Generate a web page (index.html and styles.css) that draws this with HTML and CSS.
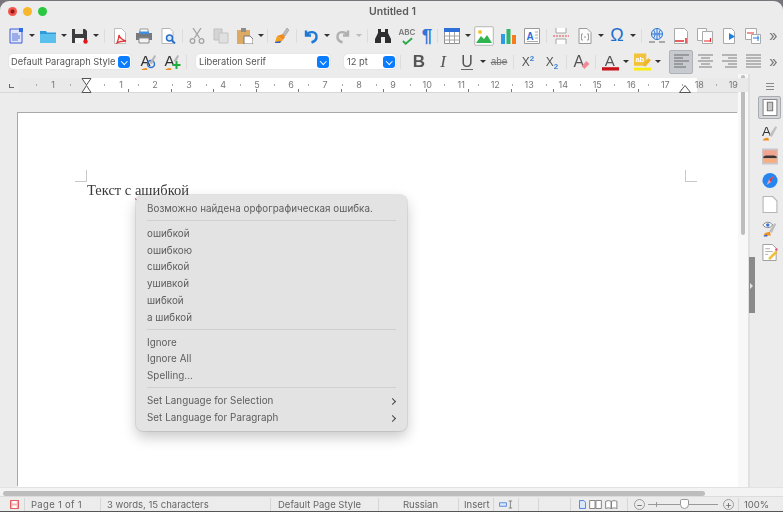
FILE: index.html
```html
<!DOCTYPE html>
<html>
<head>
  <title>Untitled 1</title>
  <link rel="stylesheet" href="styles.css">
</head>
<body>
<div class="window">
  <div class="titlebar">
    <span class="light light-red"></span>
    <span class="light light-yellow"></span>
    <span class="light light-green"></span>
    <span class="title">Untitled 1</span>
  </div>

  <div class="toolbar toolbar-main">
    <span class="tb"><svg viewBox="0 0 16 16"><path d="M2 1h9l3 3v11H2z" fill="#dfe5fb" stroke="#3f5fd6"/><path d="M4 6h6M4 8h8M4 10h8M4 12h6" stroke="#5a74d8"/><path d="M11 0h4v4h-4z" fill="#2d6be0"/></svg></span><span class="dd"></span>
    <span class="tb"><svg viewBox="0 0 16 16"><path d="M0 3h6l1 1.500h9V15H0z" fill="#2f9bd8"/><path d="M0 6h16v9H0z" fill="#5cc0ee"/></svg></span><span class="dd"></span>
    <span class="tb"><svg viewBox="0 0 16 16"><path d="M0 1h13l2 2v12H0z" fill="#3c3c3e"/><path d="M3 1h8v5H3z" fill="#e6e6e6"/><path d="M3 10h9v5H3z" fill="#f4f4f4"/><circle cx="13.500" cy="13.500" r="2.200" fill="#e8141c"/></svg></span><span class="dd"></span>
    <span class="sep"></span>
    <span class="tb"><svg viewBox="0 0 16 16"><path d="M2.500 .5h7l4 4v11h-11z" fill="#fff" stroke="#bdbdbd"/><path d="M7 7c1 3 3 5 7 6-3 0-6 0-9 2 1-3 2-5 2-8z" fill="none" stroke="#e2383a" stroke-width="1.300"/></svg></span>
    <span class="tb"><svg viewBox="0 0 16 16"><path d="M4 1h8v4H4z" fill="#fff" stroke="#9a9a9a"/><path d="M0 5h16v7H0z" fill="#77797d"/><path d="M3 3.500h10V6H3z" fill="#3f8fe0"/><path d="M3 10h10v5H3z" fill="#f2f2f2" stroke="#8a8a8a"/></svg></span>
    <span class="tb"><svg viewBox="0 0 16 16"><path d="M2 .5h8l3 3v12H2z" fill="#fff" stroke="#b5b5b5"/><circle cx="9.500" cy="10" r="3" fill="#d6e8fa" stroke="#2a6fc9" stroke-width="1.500"/><path d="M12 12.500l3 3" stroke="#2a6fc9" stroke-width="2"/></svg></span>
    <span class="sep sep-small"></span>
    <span class="tb"><svg viewBox="0 0 16 16" fill="none" stroke="#a3a3a3" stroke-width="1.300"><path d="M4 0l6.500 10M12 0L5.500 10"/><circle cx="3.500" cy="13" r="2.300"/><circle cx="12.500" cy="13" r="2.300"/></svg></span>
    <span class="tb"><svg viewBox="0 0 16 16"><path d="M1 1h8v11H1z" fill="#d4d4d4" stroke="#c0c0c0"/><path d="M6 5h9v10H6z" fill="#e0e0e0" stroke="#c4c4c4"/></svg></span>
    <span class="tb"><svg viewBox="0 0 16 16"><path d="M0 2h13v14H0z" fill="#dcaa62"/><path d="M4 0h5v4H4z" fill="#8d8d8d"/><path d="M7 8h6l3 3v5H7z" fill="#fff" stroke="#777"/></svg></span><span class="dd"></span>
    <span class="sep sep-small"></span>
    <span class="tb"><svg viewBox="0 0 16 16"><path d="M9 6l4-6 2 2-4 6z" fill="#bdbdbd" stroke="#8a8a8a" stroke-width=".5"/><path d="M3 8l6-2 2 3-2 3z" fill="#f08a1d"/><path d="M1 14l2-6 6 4-3 3z" fill="#f3a21f"/><path d="M1 14l6-1-1 2H1z" fill="#2d5fd0"/></svg></span>
    <span class="sep sep-small"></span>
    <span class="tb"><svg viewBox="0 0 16 16" fill="none" stroke="#1d78d6" stroke-width="2.400"><path d="M3 2.500v5h5M3.500 7C6 3 13 3 13.500 8c.3 3-2 5.500-5 6.500"/></svg></span><span class="dd"></span>
    <span class="tb"><svg viewBox="0 0 16 16" fill="none" stroke="#b0b0b0" stroke-width="2.400"><path d="M13 2.500v5H8M12.500 7C10 3 3 3 2.500 8c-.3 3 2 5.500 5 6.500"/></svg></span><span class="dd dd-off"></span>
    <span class="sep"></span>
    <span class="tb"><svg viewBox="0 0 16 16" fill="#2e2e30"><path d="M3 1h3v3h4V1h3v4l3 6v4H10V9H6v6H0v-4l3-6z"/></svg></span>
    <span class="tb tb-abc"><span class="abc">ABC</span><svg class="check" viewBox="0 0 12 8"><path d="M1 4l3 3 7-6" fill="none" stroke="#2aa84a" stroke-width="2"/></svg></span>
    <span class="tb tb-narrow"><span class="pilcrow">¶</span></span>
    <span class="sep sep-small"></span>
    <span class="tb"><svg viewBox="0 0 16 16"><path d="M.5 .5h15v15H.5z" fill="#fff" stroke="#8f8f8f"/><path d="M0 0h16v4H0z" fill="#2f6fd8"/><path d="M0 8h16M0 12h16M5.500 4v12M10.500 4v12" stroke="#a0a0a0"/></svg></span><span class="dd"></span>
    <span class="tb tb-hover"><svg viewBox="0 0 16 16"><path d="M0 0h16v16H0z" fill="#fff"/><circle cx="4" cy="4" r="2" fill="#f7c52c"/><path d="M0 15l5-7 3 3 3-4 5 8z" fill="#2fb550"/></svg></span>
    <span class="tb"><svg viewBox="0 0 16 16"><path d="M1 6h4v10H1z" fill="#2e9be6"/><path d="M6.500 1h4v15h-4z" fill="#34b567"/><path d="M12 7h4v9h-4z" fill="#f57d20"/></svg></span>
    <span class="tb"><svg viewBox="0 0 16 16"><path d="M.5 .5h15v15H.5z" fill="#fff" stroke="#9a9a9a"/><text x="2.500" y="12" class="svg-a">A</text><path d="M11 4h3M11 7h3M11 10h3M3 13.500h11" stroke="#aaa"/></svg></span>
    <span class="sep sep-small"></span>
    <span class="tb"><svg viewBox="0 0 16 16"><path d="M3 0v5h10V0M3 16v-5h10v5" fill="#fff" stroke="#a5a5a5"/><path d="M0 8h16" stroke="#e04a4a" stroke-dasharray="2 1"/></svg></span>
    <span class="tb"><svg viewBox="0 0 16 16" fill="none" stroke="#9a9a9a"><path d="M2 .5h8l4 4v11H2z" fill="#fbfbfb"/><path d="M6 6H4.500v6H6M10 6h1.500v6H10M7 9h2"/></svg></span><span class="dd"></span>
    <span class="tb"><span class="omega">Ω</span></span><span class="dd"></span>
    <span class="sep"></span>
    <span class="tb"><svg viewBox="0 0 16 16" fill="none" stroke="#2f74d0"><circle cx="8" cy="6" r="5.500" fill="#dcebfb"/><path d="M2.500 6h11M8 .5v11M4.500 2c2 2.500 2 5.500 0 8M11.500 2c-2 2.500-2 5.500 0 8"/><path d="M0 14h6M10 14h6" stroke="#666"/></svg></span>
    <span class="tb"><svg viewBox="0 0 16 16"><path d="M1.500 .5h10l3 3v12h-13z" fill="#fff" stroke="#aaa"/><path d="M2 13h9" stroke="#e0282c" stroke-width="1.500"/><path d="M13 10v5" stroke="#e0282c" stroke-width="1.500"/></svg></span>
    <span class="tb"><svg viewBox="0 0 16 16"><path d="M.5 .5h9v12h-9z" fill="#fff" stroke="#aaa"/><path d="M5.500 3.500h10v12h-10z" fill="#fff" stroke="#aaa"/><path d="M7 13h6M13.500 10v4" stroke="#e0282c" stroke-width="1.200"/></svg></span>
    <span class="tb"><svg viewBox="0 0 16 16"><path d="M2.500 .5h8l3 3v12h-11z" fill="#fff" stroke="#aaa"/><path d="M8 5v7l6-3.500z" fill="#1f7fe0"/></svg></span>
    <span class="tb"><svg viewBox="0 0 16 16"><path d="M.5 .5h11v11H.5z" fill="#fff" stroke="#aaa"/><path d="M2 5h7" stroke="#e0282c"/><path d="M6.500 6.500h9v9h-9z" fill="#fff" stroke="#aaa"/><path d="M8 10h6M13 7.500V13" stroke="#1f7fe0"/></svg></span>
    <span class="more">»</span>
  </div>

  <div class="toolbar toolbar-format">
    <div class="combo combo-style"><span class="combo-text">Default Paragraph Style</span><span class="combo-btn"></span></div>
    <span class="tb tb-first"><svg viewBox="0 0 16 18"><text x="0" y="13" class="svg-style">A</text><path d="M6 15c-3 0-5 1-5 2h6z" fill="#f09020"/><circle cx="10.500" cy="11" r="3.500" fill="none" stroke="#2f74d0" stroke-width="1.500"/><path d="M9 10l5-8 1.500 1-4 8z" fill="#b5b5b5"/></svg></span>
    <span class="tb"><svg viewBox="0 0 16 18"><text x="0" y="13" class="svg-style">A</text><path d="M6 15c-3 0-5 1-5 2h6z" fill="#f09020"/><path d="M12 8v8M8 12h8" stroke="#1fae3c" stroke-width="2"/><path d="M9 8l4-6 1.500 1-3 6z" fill="#b5b5b5"/></svg></span>
    <span class="sep sep-fmt"></span>
    <div class="combo combo-font"><span class="combo-text">Liberation Serif</span><span class="combo-btn"></span></div>
    <div class="combo combo-size"><span class="combo-text">12 pt</span><span class="combo-btn"></span></div>
    <span class="sep sep-fmt2"></span>
    <span class="tb tb-text"><b class="fmt-b">B</b></span>
    <span class="tb tb-text"><i class="fmt-i">I</i></span>
    <span class="tb tb-text tb-u"><span class="fmt-u">U</span></span><span class="dd"></span>
    <span class="tb tb-text"><span class="fmt-abe">abe</span></span>
    <span class="sep sep-small"></span>
    <span class="tb tb-text"><span class="fmt-x">X<sup>2</sup></span></span>
    <span class="tb tb-text"><span class="fmt-x">X<sub>2</sub></span></span>
    <span class="sep sep-small"></span>
    <span class="tb"><svg viewBox="0 0 16 18"><text x="0" y="14" class="svg-clear">A</text><path d="M8 13l5-5 3 3-5 5z" fill="#ee8d9a"/></svg></span>
    <span class="sep sep-small"></span>
    <span class="tb"><svg viewBox="0 0 18 18"><text x="3" y="13" class="svg-clear">A</text><path d="M0 14.500h18V18H0z" fill="#c9141c"/></svg></span><span class="dd"></span>
    <span class="tb"><svg viewBox="0 0 18 18"><path d="M0 0h13v13H0z" fill="#f2c33a"/><text x="1.500" y="9" class="svg-ab">ab</text><path d="M9 12l6-7 3 2-6 7z" fill="#eeb52c"/><path d="M0 15h18v3H0z" fill="#f8ec10"/></svg></span><span class="dd"></span>
    <span class="align-group">
      <span class="tb tb-align tb-on"><svg viewBox="0 0 15 15"><path d="M0 1h15M0 4h9M0 7h15M0 10h9M0 13h12" stroke="#6a6a6a"/></svg></span>
      <span class="tb tb-align"><svg viewBox="0 0 15 15"><path d="M0 1h15M3 4h9M0 7h15M3 10h9M1 13h13" stroke="#7c7c7c"/></svg></span>
      <span class="tb tb-align"><svg viewBox="0 0 15 15"><path d="M0 1h15M6 4h9M0 7h15M6 10h9M3 13h12" stroke="#7c7c7c"/></svg></span>
      <span class="tb tb-align"><svg viewBox="0 0 15 15"><path d="M0 1h15M0 4h15M0 7h15M0 10h15M0 13h15" stroke="#7c7c7c"/></svg></span>
    </span>
    <span class="more">»</span>
  </div>

  <div class="workspace">
    <div class="editor">
      <div class="ruler-row">
        <span class="tab-corner"></span>
        <div class="ruler">
          <span class="rcell rcell-gray">1</span>
          <span class="rcell rcell-blank"></span>
          <span class="rcell">1</span><span class="rcell">2</span><span class="rcell">3</span><span class="rcell">4</span><span class="rcell">5</span><span class="rcell">6</span><span class="rcell">7</span><span class="rcell">8</span><span class="rcell">9</span><span class="rcell">10</span><span class="rcell">11</span><span class="rcell">12</span><span class="rcell">13</span><span class="rcell">14</span><span class="rcell">15</span><span class="rcell">16</span><span class="rcell">17</span><span class="rcell">18</span><span class="rcell">19</span>
          <svg class="indent" viewBox="0 0 11 15"><path d="M1 .5h9L5.500 7zM5.500 7.500L10 14.500H1z" fill="#fff" stroke="#555"/></svg>
          <svg class="margin-r" viewBox="0 0 12 8"><path d="M6 .5L11.500 7.500H.5z" fill="#fff" stroke="#555"/></svg>
        </div>
      </div>
      <div class="canvas">
        <div class="page">
          <div class="page-head">
            <span class="crop crop-l"></span>
            <span class="crop crop-r"></span>
          </div>
          <p class="doc-text">Текст с <span class="misspelt">ашибкой</span></p>
        </div>
      </div>
    </div>
    <div class="vscroll"><span class="vthumb"></span></div>
    <div class="deck-handle"><span class="deck-arrow"></span></div>
    <div class="sidebar">
      <span class="sb-menu"></span>
      <span class="sb sb-on"><svg viewBox="0 0 14 16"><path d="M.5 .5h13v15H.5z" fill="#fff" stroke="#8a8a8a"/><path d="M4.500 3h5v8h-5z" fill="#c8c8c8" stroke="#777"/></svg></span>
      <span class="sb"><svg viewBox="0 0 18 18"><text x="0" y="13" class="svg-style">A</text><path d="M7 15c-3 0-6 1-6 3h7z" fill="#f09020"/><path d="M8 12l7-10 2 1-6 11z" fill="#c0c0c0"/></svg></span>
      <span class="sb"><svg viewBox="0 0 18 18"><path d="M0 0h18v18H0z" fill="#c9c5cb"/><path d="M1.500 2h15v7h-15z" fill="#f2a58e"/><path d="M1.500 9l3-1h9l3 1v2h-15z" fill="#3a3438"/><path d="M1.500 11h15v5h-15z" fill="#f6ad7f"/></svg></span>
      <span class="sb"><svg viewBox="0 0 18 18"><circle cx="9" cy="9" r="8.500" fill="#2686f0"/><path d="M13 4L8 8l-3 6 5-3z" fill="#e9a2b8"/><path d="M13 4l-5 4 2 3z" fill="#e2333b"/></svg></span>
      <span class="sb"><svg viewBox="0 0 14 16"><path d="M.5 .5h9l4 4v11H.5z" fill="#fff" stroke="#b5b5b5"/></svg></span>
      <span class="sb"><svg viewBox="0 0 18 18"><path d="M1 5c3-4 8-4 11 0-3 4-8 4-11 0z" fill="#fff" stroke="#777"/><circle cx="6.500" cy="5" r="2" fill="#3b78d8"/><path d="M8 12l6-9 2 1-5 10z" fill="#bbb"/><path d="M9 13c-3 0-7 1-7 4h8z" fill="#f09020"/><path d="M2 17l4-1v2H2z" fill="#2d5fd0"/></svg></span>
      <span class="sb"><svg viewBox="0 0 16 18"><path d="M.5 .5h10l4 4v13H.5z" fill="#fff" stroke="#999"/><path d="M3 5h5M3 8h8M3 11h3" stroke="#aaa"/><path d="M6 15l8-8 2 2-8 8z" fill="#efbf3c"/><path d="M13 6l2-2 1.500 2-1.500 1.500z" fill="#e0607a"/></svg></span>
    </div>
  </div>

  <div class="hscroll"><span class="hthumb"></span></div>

  <div class="statusbar">
    <span class="st st-icon"><svg viewBox="0 0 10 10"><path d="M.5 .5h9v9h-9z" fill="#f3b6b6" stroke="#e0484c"/><path d="M2.500 1h5v3h-5zM2.500 6h5v3h-5z" fill="#fff"/></svg></span>
    <span class="st st-page">Page 1 of 1</span>
    <span class="st st-words">3 words, 15 characters</span>
    <span class="st st-style">Default Page Style</span>
    <span class="st st-lang">Russian</span>
    <span class="st st-mode">Insert</span>
    <span class="st st-sel"><svg viewBox="0 0 16 9"><path d="M.5 2.500h8v4h-8z" fill="#dbe8fb" stroke="#4a7fd8"/><path d="M11 .5h4M13 .5v8M11 8.500h4" stroke="#777" fill="none"/></svg></span>
    <span class="st st-empty"></span>
    <span class="st st-empty2"></span>
    <span class="st st-views">
      <svg viewBox="0 0 8 10"><path d="M.5 .5h5l2 2v7h-7z" fill="#dbe8fb" stroke="#3c78dc"/></svg>
      <svg class="view-wide" viewBox="0 0 14 10"><path d="M.5 .5h6v9h-6zM7.500 .5h6v9h-6z" fill="#fff" stroke="#777"/></svg>
      <svg class="view-wide" viewBox="0 0 14 10"><path d="M.5 1.500c2-1 4-1 6 0v8c-2-1-4-1-6 0zM7 1.500c2-1 4-1 6 0v8c-2-1-4-1-6 0z" fill="#fff" stroke="#777"/></svg>
    </span>
    <span class="st st-zoom">
      <span class="zoom-btn">−</span>
      <span class="zoom-track"><span class="zoom-knob"></span></span>
      <span class="zoom-btn">+</span>
    </span>
    <span class="st st-pct">100%</span>
  </div>

  <div class="menu">
    <div class="menu-item">Возможно найдена орфографическая ошибка.</div>
    <div class="menu-sep"></div>
    <div class="menu-item">ошибкой</div>
    <div class="menu-item">ошибкою</div>
    <div class="menu-item">сшибкой</div>
    <div class="menu-item">ушивкой</div>
    <div class="menu-item">шибкой</div>
    <div class="menu-item">а шибкой</div>
    <div class="menu-sep"></div>
    <div class="menu-item">Ignore</div>
    <div class="menu-item">Ignore All</div>
    <div class="menu-item">Spelling...</div>
    <div class="menu-sep"></div>
    <div class="menu-item menu-sub">Set Language for Selection</div>
    <div class="menu-item menu-sub">Set Language for Paragraph</div>
  </div>
</div>
</body>
</html>
```

FILE: styles.css
```css
html, body {
  margin: 0;
  padding: 0;
  height: 512px;
  overflow: hidden;
  background: #77757a;
}

.window {
  position: relative;
  display: flex;
  flex-direction: column;
  width: 783px;
  height: 511px;
  margin-top: 1px;
  border-radius: 9px 9px 0 0;
  overflow: hidden;
  background: #ececec;
  font-family: Inter, "Noto Sans", sans-serif;
  color: #555;
  filter: blur(0.55px);
}

/* title bar */
.titlebar {
  display: flex;
  align-items: center;
  flex: 0 0 21px;
  padding-left: 8px;
  gap: 6px;
  position: relative;
}
.light {
  width: 9px;
  height: 9px;
  border-radius: 50%;
}
.light-red { background: radial-gradient(circle, #8c1a14 0 1.500px, #f4564e 2.500px); }
.light-yellow { background: #f8b62d; }
.light-green { background: #2ac840; }
.title {
  flex: 1;
  text-align: center;
  font-size: 10.500px;
  font-weight: 600;
  color: #5c5c5c;
  margin-right: 51px;
}

/* toolbars */
.toolbar {
  display: flex;
  align-items: center;
  padding-left: 4px;
}
.toolbar-main {
  flex: 0 0 27px;
}
.toolbar-format {
  flex: 0 0 25px;
  padding-left: 9px;
}
.tb {
  display: flex;
  align-items: center;
  justify-content: center;
  flex: 0 0 24px;
  height: 22px;
}
.tb svg {
  width: 16px;
  height: 16px;
  display: block;
}
.tb-narrow { flex-basis: 16px; }
.tb-hover {
  flex-basis: 20px;
  margin: 0 2px;
  height: 20px;
  box-sizing: border-box;
  border: 1px solid #c4c4c4;
  border-radius: 2px;
}
.dd {
  flex: 0 0 8px;
  height: 10px;
  position: relative;
}
.dd::after {
  content: "";
  position: absolute;
  left: 1px;
  top: 3px;
  border: 3px solid transparent;
  border-top: 3px solid #333;
}
.dd-off::after { border-top-color: #bbb; }
.sep {
  flex: 0 0 8px;
  height: 18px;
  position: relative;
}
.sep::after {
  content: "";
  position: absolute;
  left: 4px;
  top: 2px;
  bottom: 2px;
  width: 1px;
  background: #dcdcdc;
}
.sep-small { flex-basis: 5px; }
.sep-small::after { left: 2px; }
.more {
  margin-left: auto;
  width: 14px;
  font-size: 15px;
  line-height: 15px;
  color: #777;
}

.abc {
  position: absolute;
  font-size: 8px;
  font-weight: 600;
  color: #777;
  transform: translateY(-4px);
}
.tb-abc { position: relative; }
.tb-abc .check {
  width: 11px;
  height: 8px;
  margin-top: 10px;
}
.pilcrow {
  font-size: 19px;
  font-weight: 700;
  color: #2f74d8;
  font-family: "Liberation Sans", sans-serif;
}
.omega {
  font-size: 18px;
  color: #1f6fd0;
  font-family: "Liberation Sans", sans-serif;
}
.svg-a {
  font: 700 10px "Liberation Sans", sans-serif;
  fill: #2f6fd8;
}
.svg-style {
  font: 400 15px "Liberation Sans", sans-serif;
  fill: #333;
}
.svg-clear {
  font: 400 16px "Liberation Sans", sans-serif;
  fill: #555;
}
.svg-ab {
  font: 700 8px "Liberation Sans", sans-serif;
  fill: #fff;
}

/* combo boxes */
.combo {
  display: flex;
  align-items: center;
  height: 15px;
  background: #fff;
  border-radius: 4px;
  box-shadow: 0 0 1px #bbb;
  box-sizing: border-box;
}
.combo-text {
  flex: 1;
  font-size: 9.300px;
  white-space: nowrap;
  overflow: hidden;
  padding-left: 2px;
  color: #555;
}
.combo-btn {
  flex: 0 0 12px;
  height: 12px;
  margin-right: 1px;
  border-radius: 3px;
  background: #0a7cff;
  position: relative;
}
.combo-btn::after {
  content: "";
  position: absolute;
  left: 3.500px;
  top: 3px;
  width: 3.500px;
  height: 3.500px;
  border: solid #fff;
  border-width: 0 1.300px 1.300px 0;
  transform: rotate(45deg);
}
.combo-style { flex: 0 0 122px; }
.combo-font { flex: 0 0 134px; margin-left: 6px; }
.combo-font .combo-text { padding-left: 3px; }
.combo-size { flex: 0 0 52px; margin-left: 14px; }
.combo-size .combo-text { padding-left: 3px; }
.tb-first { margin-left: 5px; }
.toolbar-format .tb svg { width: 17px; height: 18px; }
.sep-fmt { flex-basis: 6px; }
.sep-fmt::after { left: 2px; }
.sep-fmt2 { flex-basis: 11px; }

.tb-text { color: #555; }
.fmt-b { font: 700 17px "Liberation Sans", sans-serif; }
.fmt-i { font: italic 400 17px "Liberation Serif", serif; }
.fmt-u {
  font: 400 16px "Liberation Sans", sans-serif;
  border-bottom: 1.500px solid #666;
  line-height: 15px;
  height: 15px;
  display: block;
}
.fmt-abe {
  font: 400 10px "Liberation Sans", sans-serif;
  text-decoration: line-through;
  color: #777;
}
.fmt-x { font: 400 12px "Liberation Sans", sans-serif; }
.fmt-x sup, .fmt-x sub {
  font-size: 8px;
  font-weight: 700;
  color: #3a82e0;
  line-height: 0;
}

.align-group {
  display: flex;
  align-items: center;
  margin-left: 7px;
}
.tb-align {
  flex-basis: 24px;
  height: 24px;
  box-sizing: border-box;
}
.tb-align svg, .toolbar-format .tb-align svg { width: 15px; height: 15px; }
.tb-on {
  background: #c7cacf;
  border: 1px solid #aeb1b6;
  border-radius: 2px;
}

/* main area */
.workspace {
  flex: 1;
  display: flex;
  min-height: 0;
}
.editor {
  flex: 0 0 738px;
  display: flex;
  flex-direction: column;
  min-width: 0;
}
.ruler-row {
  display: flex;
  align-items: center;
  flex: 0 0 19px;
  padding-top: 3px;
  box-sizing: border-box;
  border-bottom: 1px solid #d8d8d8;
}
.tab-corner {
  flex: 0 0 19px;
  height: 14px;
  position: relative;
}
.tab-corner::after {
  content: "";
  position: absolute;
  left: 9px;
  top: 6px;
  width: 4px;
  height: 3px;
  border: solid #666;
  border-width: 0 0 1.500px 1.500px;
}
.ruler {
  position: relative;
  display: flex;
  flex: 1;
  height: 14px;
  background:
    linear-gradient(#e9e9e9, #e9e9e9) 0 0 / 68px 100% no-repeat,
    linear-gradient(#e9e9e9, #e9e9e9) 100% 0 / 53px 100% no-repeat,
    #fff;
}
.ruler::after {
  content: "";
  position: absolute;
  left: 68px;
  right: 53px;
  bottom: 0;
  height: 3px;
  background: repeating-linear-gradient(90deg, transparent 0 41.500px, #777 41.500px 42.500px);
}
.rcell {
  flex: 0 0 34.030px;
  text-align: center;
  font-size: 9px;
  line-height: 14px;
  color: #777;
  position: relative;
}
.rcell::after {
  content: "";
  position: absolute;
  left: 0;
  top: 6px;
  width: 1px;
  height: 2px;
  background: #aaa;
}
.rcell-gray { margin-left: 17px; }
.indent {
  position: absolute;
  left: 62px;
  top: 0;
  width: 11px;
  height: 15px;
  z-index: 1;
}
.margin-r {
  position: absolute;
  left: 660px;
  top: 7px;
  width: 12px;
  height: 8px;
  z-index: 1;
}
.canvas {
  flex: 1;
  min-height: 0;
  padding: 20px 0 0 18px;
  overflow: hidden;
}
.page {
  height: 100%;
  background: #fff;
  box-shadow: -1px -1px 0 #a8a8a8;
  padding: 57px 41px 0 69px;
  box-sizing: border-box;
}
.page-head {
  display: flex;
  justify-content: space-between;
  margin-left: -12px;
  width: 622px;
}
.crop {
  width: 12px;
  height: 12px;
  box-sizing: border-box;
}
.crop-l { border: solid #c8c8c8; border-width: 0 1px 1px 0; }
.crop-r { border: solid #c8c8c8; border-width: 0 0 1px 1px; }
.doc-text {
  margin: -1px 0 0 0;
  font: 14.500px/18px "Liberation Serif", serif;
  color: #3a3a3a;
}
.misspelt {
  text-decoration: underline wavy #e0282c 1px;
}

.vscroll {
  flex: 0 0 10px;
  background: #f8f8f8;
  padding: 1px 3px 0;
  box-sizing: border-box;
}
.vthumb {
  display: block;
  height: 160px;
  border-radius: 3px;
  background: #bdbdbd;
}
.deck-handle {
  flex: 0 0 2px;
  position: relative;
  background: #e0e0e0;
}
.deck-arrow {
  position: absolute;
  left: 1px;
  top: 183px;
  width: 6px;
  height: 56px;
  background: #8a8a8a;
}
.deck-arrow::after {
  content: "";
  position: absolute;
  left: 1px;
  top: 26px;
  border: 3px solid transparent;
  border-left: 3px solid #e4e4e4;
}
.sidebar {
  flex: 1;
  display: flex;
  flex-direction: column;
  align-items: center;
  padding: 6px 0 0 6px;
}
.sb-menu {
  width: 8px;
  height: 5px;
  margin: 3px 0 6px;
  border: solid #888;
  border-width: 1px 0;
  position: relative;
}
.sb-menu::after {
  content: "";
  position: absolute;
  left: 0;
  right: 0;
  top: 2px;
  height: 1px;
  background: #888;
}
.sb {
  display: flex;
  align-items: center;
  justify-content: center;
  width: 23px;
  height: 24px;
}
.sb svg { width: 16px; height: 17px; display: block; }
.sb-on {
  height: 23px;
  box-sizing: border-box;
  background: #d3d5d8;
  border: 1px solid #a9acb0;
  border-radius: 2px;
  margin-bottom: 1px;
}

/* bottom bars */
.hscroll {
  flex: 0 0 10px;
  padding: 3px 0 0 3px;
  box-sizing: border-box;
  background: #f3f3f3;
  border-top: 1px solid #e2e2e2;
  border-bottom: 1px solid #dcdcdc;
}
.hthumb {
  display: block;
  width: 702px;
  height: 5px;
  border-radius: 3px;
  background: #bdbdbd;
}
.statusbar {
  display: flex;
  align-items: center;
  flex: 0 0 15px;
  font-size: 9.500px;
  color: #666;
  padding-bottom: 1px;
  box-sizing: border-box;
  box-shadow: inset 0 -1px 0 #555;
}
.st {
  display: flex;
  align-items: center;
  height: 13px;
  white-space: nowrap;
  box-sizing: border-box;
  border-right: 1px solid #d6d6d6;
}
.st-icon { flex: 0 0 25px; padding-left: 10px; }
.st-icon svg { width: 9px; height: 9px; }
.st-page { flex: 0 0 76px; padding-left: 6px; letter-spacing: .3px; }
.st-words { flex: 0 0 170px; padding-left: 6px; }
.st-style { flex: 0 0 108px; padding-left: 7px; }
.st-lang { flex: 0 0 80px; padding-left: 24px; }
.st-mode { flex: 0 0 35px; padding-left: 5px; }
.st-sel { flex: 0 0 25px; padding-left: 5px; }
.st-sel svg { width: 14px; height: 9px; }
.st-empty { flex: 0 0 20px; }
.st-empty2 { flex: 0 0 32px; }
.st-views { flex: 0 0 57px; gap: 3px; padding-left: 8px; }
.st-views svg { width: 7px; height: 9px; }
.st-views .view-wide { width: 13px; }
.st-zoom { flex: 0 0 111px; gap: 0; padding: 0 4px 0 6px; }
.zoom-btn {
  width: 11px;
  height: 11px;
  box-sizing: border-box;
  border: 1px solid #999;
  border-radius: 50%;
  font-size: 10px;
  line-height: 9px;
  text-align: center;
  color: #666;
  flex: none;
}
.zoom-track {
  flex: 1;
  height: 1px;
  background: #999;
  position: relative;
  margin: 0 5px 0 3px;
}
.zoom-track::before {
  content: "";
  position: absolute;
  left: 8px;
  top: -2px;
  width: 1px;
  height: 5px;
  background: #999;
}
.zoom-knob {
  position: absolute;
  left: 32px;
  top: -5px;
  width: 9px;
  height: 10px;
  box-sizing: border-box;
  background: #fff;
  border: 1px solid #999;
  border-radius: 2px 2px 5px 5px;
}
.st-pct { border: 0; padding-left: 5px; }

/* spelling context menu */
.menu {
  position: absolute;
  left: 136px;
  top: 194px;
  width: 271px;
  height: 236px;
  padding: 6px 11px;
  box-sizing: border-box;
  background: #e3e3e3;
  border-radius: 7px;
  box-shadow: 0 0 0 1px rgba(0, 0, 0, .08), 0 6px 14px rgba(0, 0, 0, .22);
  font-size: 9.800px;
  letter-spacing: .05px;
  color: #5c5c5c;
}
.menu-item {
  height: 16.800px;
  line-height: 16.800px;
  position: relative;
  white-space: nowrap;
}
.menu-sep {
  height: 1px;
  background: #d0d0d0;
  margin: 2.500px 0 4.500px;
}
.menu-sub::after {
  content: "";
  position: absolute;
  right: 1px;
  top: 6px;
  width: 4px;
  height: 4px;
  border: solid #444;
  border-width: 1.200px 1.200px 0 0;
  transform: rotate(45deg);
}
```
